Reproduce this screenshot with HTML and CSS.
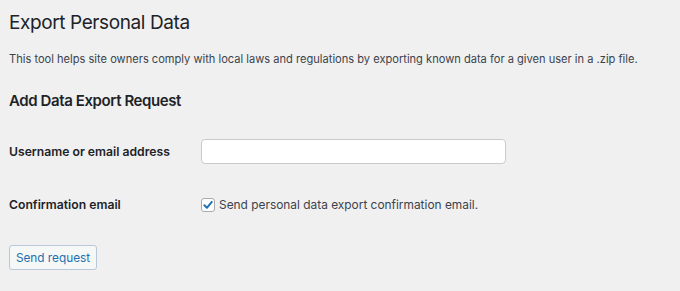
FILE: index.html
```html
<!DOCTYPE html>
<html lang="en">
<head>
<meta charset="utf-8">
<title>Export Personal Data</title>
<link rel="stylesheet" href="styles.css">
</head>
<body>
<div class="wrap">
  <h1 class="title">Export Personal Data</h1>
  <p class="desc">This tool helps site owners comply with local laws and regulations by exporting known data for a given user in a .zip file.</p>
  <h2 class="subtitle">Add Data Export Request</h2>
  <form class="form">
    <div class="row">
      <label class="label" for="user">Username or email address</label>
      <input class="text-input" id="user" type="text">
    </div>
    <div class="row">
      <span class="label">Confirmation email</span>
      <label class="check">
        <span class="box"><svg viewBox="0 0 14 14" width="14" height="14"><path d="M3.4 7.3 L5.9 9.8 L10.8 3.9" fill="none" stroke="#2271b1" stroke-width="2" stroke-linecap="round" stroke-linejoin="round"/></svg></span>
        <span class="check-text">Send personal data export confirmation email.</span>
      </label>
    </div>
    <div class="actions">
      <button class="btn" type="button">Send request</button>
    </div>
  </form>
</div>
</body>
</html>
```

FILE: styles.css
```css
html, body {
  margin: 0;
  padding: 0;
  background: #f0f0f1;
}
body {
  font-family: Inter, "Noto Sans", sans-serif;
  color: #1d2327;
}
.wrap {
  padding: 11px 9px 0 9px;
}
.title {
  font-size: 19px;
  font-weight: 400;
  letter-spacing: -0.4px;
  line-height: 24px;
  margin: 0;
  color: #1d2327;
}
.desc {
  font-size: 11.1px;
  line-height: 16px;
  margin: 16px 0 0 0;
  color: #3c434a;
}
.subtitle {
  font-size: 15px;
  font-weight: 600;
  letter-spacing: -0.4px;
  line-height: 20px;
  margin: 24px 0 0 0;
  color: #1d2327;
}
.form {
  margin-top: 28px;
}
.row {
  display: flex;
  align-items: center;
  height: 25px;
  margin-bottom: 28px;
}
.label {
  width: 192px;
  flex-shrink: 0;
  font-size: 12.2px;
  font-weight: 600;
  color: #1d2327;
}
.text-input {
  width: 305px;
  height: 25px;
  box-sizing: border-box;
  border: 1px solid #c9cacc;
  border-radius: 4px;
  background: #fff;
  margin: 0;
  padding: 0 8px;
}
.check {
  display: flex;
  align-items: center;
  gap: 4px;
}
.box {
  width: 14px;
  height: 14px;
  box-sizing: border-box;
  border: 1px solid #a7aaad;
  border-radius: 3px;
  background: #fff;
  position: relative;
}
.box svg {
  position: absolute;
  left: -1px;
  top: -1px;
}
.check-text {
  font-size: 11.9px;
  color: #3c434a;
}
.actions {
  margin-top: 3px;
}
.btn {
  font-family: Inter, "Noto Sans", sans-serif;
  font-size: 11.8px;
  color: #2271b1;
  background: #f6f7f7;
  border: 1px solid #b9c7d6;
  border-radius: 3px;
  height: 25px;
  width: 88px;
  padding: 0;
  margin: 0;
}
```
